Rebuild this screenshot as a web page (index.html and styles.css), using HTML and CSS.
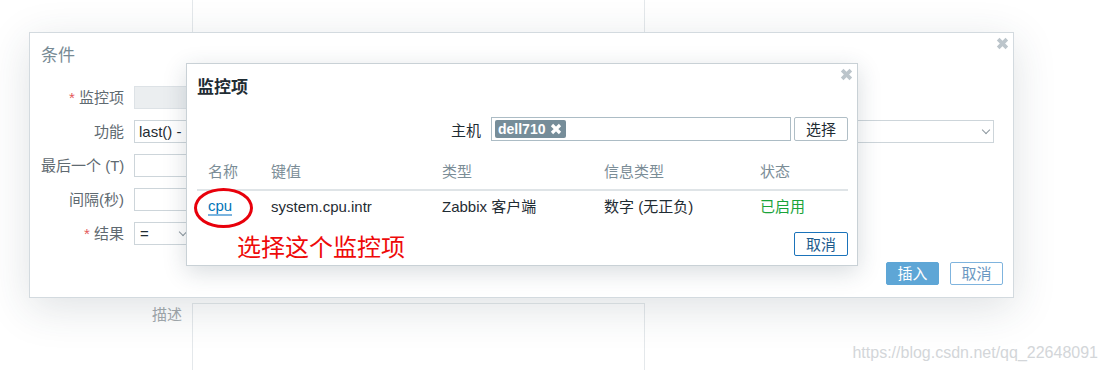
FILE: index.html
```html
<!DOCTYPE html>
<html lang="zh-CN">
<head>
  <meta charset="UTF-8" />
  <title>条件 - 监控项</title>
  <link rel="stylesheet" href="styles.css">
</head>
<body>
  <div class="page">
    <div class="bg-form">
      <div class="bg-row bg-top">
        <div class="bg-label"></div>
        <div class="bg-box"></div>
      </div>
      <div class="bg-row bg-desc">
        <div class="bg-label">描述</div>
        <div class="bg-box"></div>
      </div>
    </div>

    <div class="dlg dlg-outer">
      <span class="close-x">
        <svg width="13" height="13" viewBox="0 0 12 12"><path d="M2 2 L10 10 M10 2 L2 10" /></svg>
      </span>
      <h2 class="dlg-title muted">条件</h2>
      <div class="form-grid">
        <label class="form-label"><span class="req">*</span> 监控项</label>
        <div class="field field-item"></div>

        <label class="form-label">功能</label>
        <div class="field field-select field-func">last() - 最后 (最近) 的T值 &gt; N<span class="chev"></span></div>

        <label class="form-label">最后一个 (T)</label>
        <div class="field field-short"></div>

        <label class="form-label">间隔(秒)</label>
        <div class="field field-short"></div>

        <label class="form-label"><span class="req">*</span> 结果</label>
        <div class="field field-select field-result">=<span class="chev"></span></div>
      </div>
      <div class="outer-foot">
        <button class="btn btn-primary">插入</button>
        <button class="btn btn-alt-light">取消</button>
      </div>
    </div>

    <div class="dlg dlg-inner">
      <span class="close-x">
        <svg width="13" height="13" viewBox="0 0 12 12"><path d="M2 2 L10 10 M10 2 L2 10" /></svg>
      </span>
      <h2 class="dlg-title">监控项</h2>
      <div class="filter-row">
        <span class="filter-label">主机</span>
        <div class="multiselect">
          <span class="tag">dell710
            <svg width="12" height="12" viewBox="0 0 12 12"><path d="M2 2 L10 10 M10 2 L2 10" /></svg>
          </span>
        </div>
        <button class="btn btn-grey">选择</button>
      </div>
      <table class="list">
        <colgroup>
          <col style="width:63px">
          <col style="width:171px">
          <col style="width:162px">
          <col style="width:156px">
          <col>
        </colgroup>
        <thead>
          <tr><th>名称</th><th>键值</th><th>类型</th><th>信息类型</th><th>状态</th></tr>
        </thead>
        <tbody>
          <tr>
            <td><span class="circled"><a class="link" href="#">cpu</a></span></td>
            <td>system.cpu.intr</td>
            <td>Zabbix 客户端</td>
            <td>数字 (无正负)</td>
            <td class="green">已启用</td>
          </tr>
        </tbody>
      </table>
      <div class="inner-foot">
        <span class="note">选择这个监控项</span>
        <button class="btn btn-alt">取消</button>
      </div>
    </div>

    <div class="watermark">https://blog.csdn.net/qq_22648091</div>
  </div>
</body>
</html>
```

FILE: styles.css
```css
* {
  box-sizing: border-box;
}
html, body {
  margin: 0;
  padding: 0;
  background: #fff;
  font-family: 'Liberation Sans', 'Noto Sans CJK SC', sans-serif;
  font-size: 15px;
  color: #1f2c33;
}
.page {
  position: relative;
  width: 1107px;
  height: 370px;
  overflow: hidden;
}

/* page behind the dialogs */
.bg-row {
  display: flex;
  gap: 10px;
}
.bg-label {
  width: 182px;
  text-align: right;
  color: #a3a9ad;
  line-height: 20px;
}
.bg-box {
  width: 453px;
  border: 1px solid #e4e8eb;
}
.bg-top .bg-box {
  height: 60px;
  border-top: 0;
}
.bg-desc {
  margin-top: 243px;
}
.bg-desc .bg-label {
  padding-top: 2px;
}
.bg-desc .bg-box {
  height: 100px;
}

/* dialogs */
.dlg {
  position: absolute;
  background: #fff;
  border: 1px solid #d3dadf;
}
.dlg-outer {
  left: 29px;
  top: 32px;
  width: 985px;
  height: 266px;
  padding: 13px 10px 0 11px;
  box-shadow: 0 10px 40px rgba(40, 60, 75, 0.15);
}
.dlg-inner {
  left: 186px;
  top: 63px;
  width: 672px;
  height: 203px;
  padding: 14px 9px 0 10px;
  border-color: #c9d1d6;
  box-shadow: 0 6px 22px rgba(40, 60, 75, 0.18);
}
.close-x {
  position: absolute;
  top: 4px;
  right: 4px;
  width: 13px;
  height: 13px;
  display: flex;
}
.close-x path {
  stroke: #bcc5cb;
  stroke-width: 3.4;
  fill: none;
}
.dlg-title {
  margin: 0;
  font-size: 17px;
  line-height: 20px;
  font-weight: bold;
  color: #1f2c33;
}
.dlg-title.muted {
  color: #778a94;
  font-weight: normal;
}

/* outer form */
.form-grid {
  margin-top: 20px;
  display: grid;
  grid-template-columns: 83px 1fr;
  column-gap: 10px;
  row-gap: 11px;
}
.form-label {
  text-align: right;
  line-height: 23px;
  color: #5f6a71;
  white-space: nowrap;
}
.req {
  color: #e45959;
}
.field {
  position: relative;
  height: 23px;
  border: 1px solid #cdd5da;
  background: #fff;
  line-height: 21px;
  padding: 0 4px;
  white-space: nowrap;
  overflow: hidden;
}
.field-item {
  width: 460px;
  background: #ebeef0;
  border-color: #dde2e6;
}
.field-func {
  width: 860px;
}
.field-short {
  width: 120px;
}
.field-result {
  width: 57px;
  padding-left: 5px;
}
.chev {
  position: absolute;
  right: 4px;
  top: 6px;
  width: 6px;
  height: 6px;
  border-right: 1px solid #8c979e;
  border-bottom: 1px solid #8c979e;
  transform: rotate(45deg);
}
.outer-foot {
  margin-top: 17px;
  display: flex;
  justify-content: flex-end;
  gap: 11px;
}

/* buttons */
.btn {
  font-family: inherit;
  font-size: 15px;
  height: 23px;
  width: 53px;
  padding: 0;
  border-radius: 2px;
  border: 1px solid;
  background: #fff;
  line-height: 21px;
}
.btn-primary {
  background: #5ea6d6;
  border-color: #5ea6d6;
  color: #fff;
}
.btn-alt-light {
  border-color: #7fb4de;
  color: #6b98c2;
}
.btn-grey {
  width: 54px;
  height: 24px;
  border-color: #b0bec6;
  color: #1f2c33;
}
.btn-alt {
  width: 54px;
  height: 24px;
  border-color: #1b73ba;
  color: #1e5a8c;
}

/* inner dialog */
.filter-row {
  margin-top: 19px;
  display: flex;
  justify-content: flex-end;
  align-items: center;
  height: 24px;
}
.filter-label {
  margin-right: 10px;
}
.multiselect {
  width: 300px;
  height: 24px;
  border: 1px solid #acbcc5;
  padding: 2px 3px;
  margin-right: 3px;
  display: flex;
  align-items: center;
}
.tag {
  display: inline-flex;
  align-items: center;
  gap: 5px;
  height: 18px;
  padding: 0 4px 0 3px;
  background: #768d99;
  color: #fff;
  border-radius: 2px;
  font-size: 14px;
  font-weight: bold;
  line-height: 18px;
}
.tag path {
  stroke: #fff;
  stroke-width: 3.2;
  fill: none;
}
.list {
  width: 100%;
  border-collapse: collapse;
  table-layout: fixed;
}
.list th {
  text-align: left;
  font-weight: normal;
  color: #7b8d97;
  padding: 22px 0 8px 11px;
  line-height: 18px;
  border-bottom: 2px solid #dfe4e7;
}
.list td {
  padding: 6px 0 6px 11px;
  line-height: 18px;
  white-space: nowrap;
}
.circled {
  position: relative;
  display: inline-block;
}
.circled::before {
  content: "";
  position: absolute;
  left: -14px;
  top: -9px;
  width: 53px;
  height: 34px;
  border: 3px solid #e8000b;
  border-radius: 50%;
}
.link {
  color: #0275b8;
  text-decoration: none;
  border-bottom: 2px solid #7ab4df;
  line-height: 16px;
  display: inline-block;
}
.green {
  color: #1aa33a;
}
.inner-foot {
  margin-top: 10px;
  display: flex;
  justify-content: space-between;
  align-items: flex-start;
}
.note {
  margin-left: 40px;
  margin-top: 2px;
  color: #ee0a0a;
  font-size: 24px;
  line-height: 28px;
}

.watermark {
  position: absolute;
  right: 9px;
  bottom: 8px;
  font-size: 16px;
  color: #d3d6d9;
}
```
